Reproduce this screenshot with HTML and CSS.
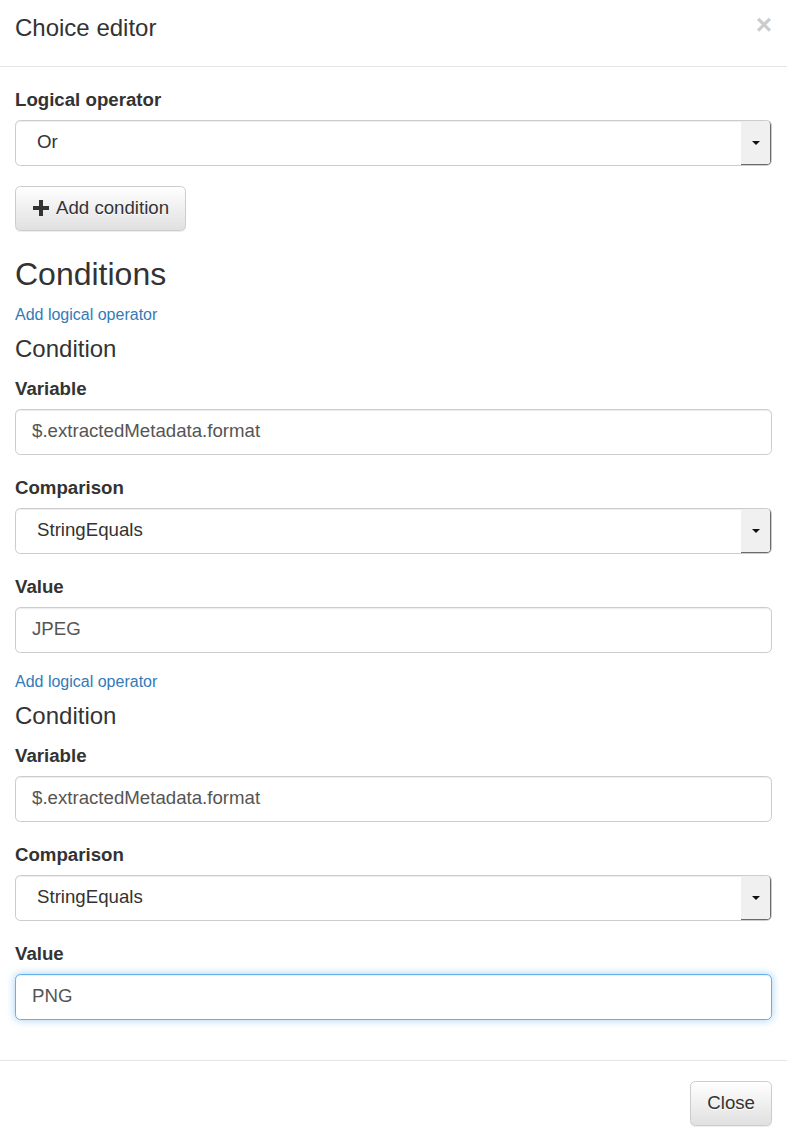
FILE: index.html
```html
<!DOCTYPE html>
<html lang="en">
<head>
<meta charset="utf-8">
<title>Choice editor</title>
<link rel="stylesheet" href="styles.css">
</head>
<body>
<div class="modal">
  <div class="modal-header">
    <h4 class="modal-title">Choice editor</h4>
    <button class="close" type="button" aria-label="Close">×</button>
  </div>
  <div class="modal-body">
    <div class="form-group">
      <label class="control-label">Logical operator</label>
      <div class="select">
        <span class="select-value">Or</span>
        <span class="select-arrow"><span class="tri"></span></span>
      </div>
    </div>
    <button class="btn" type="button"><svg class="icon-plus" width="16" height="16" viewBox="0 0 16 16"><path d="M6 0h4v6h6v4h-6v6h-4v-6h-6v-4h6z" fill="#333"/></svg>Add condition</button>
    <h3 class="section-title">Conditions</h3>

    <div class="add-op"><a href="#">Add logical operator</a></div>
    <h4 class="cond-title">Condition</h4>
    <div class="form-group">
      <label class="control-label">Variable</label>
      <div class="input">$.extractedMetadata.format</div>
    </div>
    <div class="form-group">
      <label class="control-label">Comparison</label>
      <div class="select">
        <span class="select-value">StringEquals</span>
        <span class="select-arrow"><span class="tri"></span></span>
      </div>
    </div>
    <div class="form-group">
      <label class="control-label">Value</label>
      <div class="input">JPEG</div>
    </div>

    <div class="add-op"><a href="#">Add logical operator</a></div>
    <h4 class="cond-title">Condition</h4>
    <div class="form-group">
      <label class="control-label">Variable</label>
      <div class="input">$.extractedMetadata.format</div>
    </div>
    <div class="form-group">
      <label class="control-label">Comparison</label>
      <div class="select">
        <span class="select-value">StringEquals</span>
        <span class="select-arrow"><span class="tri"></span></span>
      </div>
    </div>
    <div class="form-group">
      <label class="control-label">Value</label>
      <div class="input focus">PNG</div>
    </div>
  </div>
  <div class="modal-footer">
    <button class="btn" type="button">Close</button>
  </div>
</div>
</body>
</html>
```
FILE: styles.css
```css
* { box-sizing: border-box; }
html, body { margin: 0; padding: 0; background: #fff; }
body {
  font-family: "Liberation Sans", Arial, Helvetica, sans-serif;
  font-size: 18.67px;
  line-height: 26.67px;
  color: #333;
}
.modal { width: 787px; }

.modal-header {
  display: flex;
  justify-content: space-between;
  align-items: flex-start;
  padding: 15px 15px 25px;
  border-bottom: 1px solid #e5e5e5;
}
.modal-title {
  margin: 0;
  font-size: 24px;
  line-height: 26px;
  font-weight: normal;
  color: #333;
}
.close {
  margin: -4px 0 0 0;
  padding: 0;
  border: 0;
  background: transparent;
  font-family: "Liberation Sans", Arial, sans-serif;
  font-size: 28px;
  font-weight: bold;
  line-height: 1;
  color: #000;
  opacity: 0.2;
  text-shadow: 0 1px 0 #fff;
}

.modal-body { padding: 20px 15px; }

.form-group { margin-bottom: 20.33px; }
.control-label {
  display: block;
  font-weight: bold;
  margin-bottom: 6.67px;
}

.input {
  height: 45.33px;
  padding: 8px 16px;
  border: 1px solid #ccc;
  border-radius: 5.33px;
  color: #555;
  background: #fff;
  box-shadow: inset 0 1px 1px rgba(0,0,0,.075);
}
.input.focus {
  border-color: #66afe9;
  box-shadow: inset 0 1px 1px rgba(0,0,0,.075), 0 0 8px rgba(102,175,233,.6);
}

.select {
  display: flex;
  height: 45.33px;
  border: 1px solid #ccc;
  border-radius: 5.33px;
  background: #fff;
  color: #555;
  box-shadow: inset 0 1px 1px rgba(0,0,0,.075);
  overflow: hidden;
}
.select-value {
  flex: 1;
  padding: 8px 16px 8px 21px;
  color: #333;
}
.select-arrow {
  width: 31px;
  display: flex;
  align-items: center;
  justify-content: center;
  background: #f0f0f0;
  border-right: 2px solid #6a6a6a;
  border-bottom: 2px solid #6a6a6a;
  border-radius: 0 4px 4px 0;
  margin-right: -1px;
  margin-bottom: -1px;
}
.tri {
  width: 0;
  height: 0;
  border-left: 4px solid transparent;
  border-right: 4px solid transparent;
  border-top: 4px solid #111;
  margin-top: 1px;
}

.btn {
  display: inline-flex;
  align-items: center;
  height: 44.67px;
  padding: 8px 16px;
  font-family: "Liberation Sans", Arial, sans-serif;
  font-size: 18.67px;
  line-height: 26.67px;
  color: #333;
  background: linear-gradient(to bottom, #fff 0, #e0e0e0 100%);
  border: 1px solid #ccc;
  border-radius: 5.33px;
  box-shadow: inset 0 1px 0 rgba(255,255,255,.15), 0 1px 1px rgba(0,0,0,.075);
  text-shadow: 0 1px 0 #fff;
}
.icon-plus {
  margin: 0 7px 0 1px;
  flex: none;
}

.section-title {
  margin: 26.67px 0 13.33px;
  font-size: 32px;
  line-height: 35.2px;
  font-weight: normal;
  color: #333;
}
.add-op {
  font-size: 16px;
  line-height: 17px;
}
.add-op a {
  color: #337ab7;
  text-decoration: none;
}
.cond-title {
  margin: 13.33px 0;
  font-size: 24px;
  line-height: 26.4px;
  font-weight: normal;
  color: #333;
}

.modal-footer {
  display: flex;
  justify-content: flex-end;
  padding: 20px 15px;
  border-top: 1px solid #e5e5e5;
}
```
